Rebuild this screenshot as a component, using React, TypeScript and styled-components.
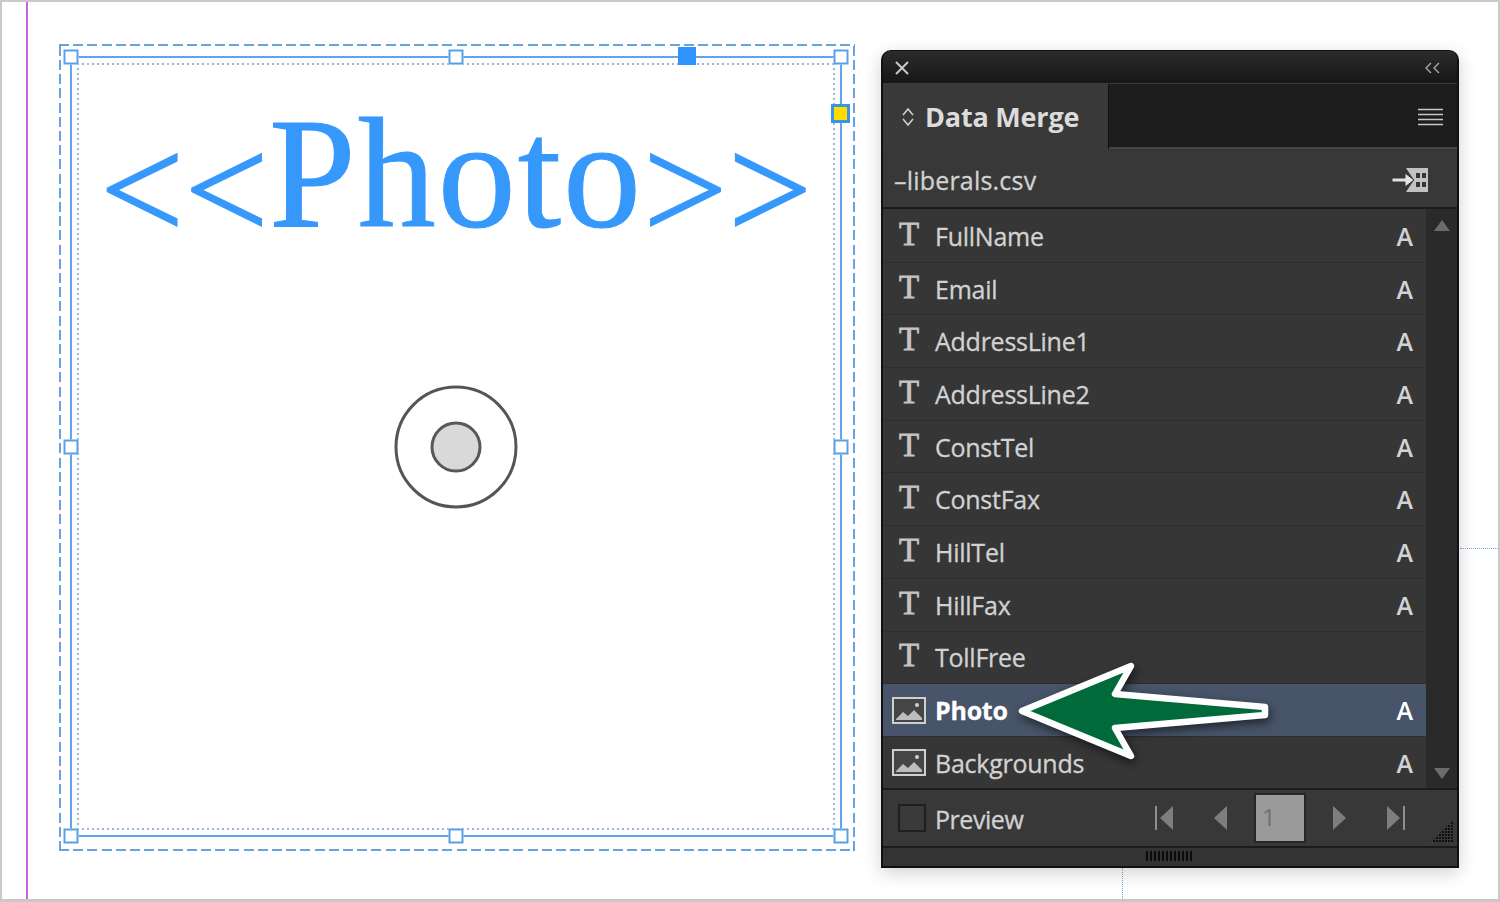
import React from 'react';
import styled, {createGlobalStyle} from 'styled-components';

const fields = [
    {name: 'FullName', kind: 'text', type: 'A'},
    {name: 'Email', kind: 'text', type: 'A'},
    {name: 'AddressLine1', kind: 'text', type: 'A'},
    {name: 'AddressLine2', kind: 'text', type: 'A'},
    {name: 'ConstTel', kind: 'text', type: 'A'},
    {name: 'ConstFax', kind: 'text', type: 'A'},
    {name: 'HillTel', kind: 'text', type: 'A'},
    {name: 'HillFax', kind: 'text', type: 'A'},
    {name: 'TollFree', kind: 'text', type: ''},
    {name: 'Photo', kind: 'image', type: 'A', selected: true},
    {name: 'Backgrounds', kind: 'image', type: 'A'},
];

const handles = [
    [0, 0], [50, 0], [100, 0],
    [0, 50], [100, 50],
    [0, 100], [50, 100], [100, 100],
];

const GlobalStyle = createGlobalStyle`
  html, body {
    margin: 0;
    padding: 0;
    background: #fff;
  }
`

const Page = styled.div`
  position: relative;
  box-sizing: border-box;
  width: 1500px;
  height: 902px;
  display: flex;
  align-items: flex-start;
  padding: 42px 0 0 57px;
  border: 2px solid #c9c9c9;
  border-bottom-width: 3px;
  background: #fff;
  overflow: hidden;
  font-family: "Open Sans", "Liberation Sans", sans-serif;
`

const MarginGuide = styled.div`
  position: absolute;
  left: 24px;
  top: 0;
  bottom: 0;
  width: 2px;
  background: #c565e2;
`

const RulerGuideH = styled.div`
  position: absolute;
  left: 1458px;
  right: 0;
  top: 546px;
  border-top: 1px dotted #6fa5dc;
`

const RulerGuideV = styled.div`
  position: absolute;
  left: 1120px;
  top: 866px;
  bottom: 0;
  border-left: 1px dotted #6fa5dc;
`

const SelectionBounds = styled.div`
  flex: none;
  box-sizing: border-box;
  width: 796px;
  height: 807px;
  display: flex;
  padding: 12px 13px 14px 11px;
  background:
    repeating-linear-gradient(90deg, #6aa3e0 0 10px, transparent 10px 14.2px) top left / 100% 2px no-repeat,
    repeating-linear-gradient(90deg, #6aa3e0 0 10px, transparent 10px 14.2px) bottom left / 100% 2px no-repeat,
    repeating-linear-gradient(0deg, #6aa3e0 0 10px, transparent 10px 14.2px) top left / 2px 100% no-repeat,
    repeating-linear-gradient(0deg, #6aa3e0 0 10px, transparent 10px 14.2px) top right / 2px 100% no-repeat;
`

const ImageFrame = styled.div`
  position: relative;
  flex: 1;
  display: flex;
  padding: 5px;
  border: 2px solid #62a5ea;
`

const TextFrame = styled.div`
  position: relative;
  flex: 1;
  display: flex;
  justify-content: center;
  background:
    repeating-linear-gradient(90deg, #9db6d4 0 2px, transparent 2px 5px) top left / 100% 2px no-repeat,
    repeating-linear-gradient(90deg, #9db6d4 0 2px, transparent 2px 5px) bottom left / 100% 2px no-repeat,
    repeating-linear-gradient(0deg, #9db6d4 0 2px, transparent 2px 5px) top left / 2px 100% no-repeat,
    repeating-linear-gradient(0deg, #9db6d4 0 2px, transparent 2px 5px) top right / 2px 100% no-repeat;
`

const Placeholder = styled.div`
  margin-top: 23px;
  font-family: "Liberation Serif", "Times New Roman", serif;
  font-size: 156px;
  line-height: 176px;
  color: #3798fb;
  -webkit-text-stroke: 1px #3798fb;
  white-space: nowrap;
`

const Bracket = styled.span`
  font-size: 150px;
  line-height: 0;
  vertical-align: -14px;
`

const PlaceholderWord = styled.span`
  letter-spacing: 2px;
`

const Handle = styled.span<{ $x: number, $y: number }>`
  position: absolute;
  left: calc(${({$x}) => $x}% + ${({$x}) => $x / 50 - 1}px);
  top: calc(${({$y}) => $y}% + ${({$y}) => $y / 50 - 1}px);
  box-sizing: border-box;
  width: 15px;
  height: 15px;
  transform: translate(-50%, -50%);
  background: #fff;
  border: 2px solid #5b9fe6;
`

const AnchorHandle = styled.span`
  position: absolute;
  left: 606px;
  top: -11px;
  width: 18px;
  height: 18px;
  background: #2f93fb;
`

const CornerHandle = styled.span`
  position: absolute;
  right: -10px;
  top: 46px;
  box-sizing: border-box;
  width: 19px;
  height: 19px;
  background: #ffdc00;
  border: 3px solid #3b94e6;
`

const TargetOuter = styled.div`
  position: absolute;
  left: 50%;
  top: 50%;
  box-sizing: border-box;
  width: 123px;
  height: 123px;
  display: flex;
  align-items: center;
  justify-content: center;
  transform: translate(-50%, -50%);
  border: 3px solid #555;
  border-radius: 50%;
`

const TargetInner = styled.div`
  box-sizing: border-box;
  width: 51px;
  height: 51px;
  border: 3px solid #585858;
  border-radius: 50%;
  background: #d9d9d9;
`

const Panel = styled.div`
  position: relative;
  flex: none;
  box-sizing: border-box;
  width: 578px;
  height: 818px;
  margin: 6px 0 0 26px;
  display: flex;
  flex-direction: column;
  background: #353535;
  border: 2px solid #111;
  border-top-width: 1px;
  border-radius: 10px 10px 0 0;
  box-shadow: 0 5px 18px rgba(0, 0, 0, .18);
  color: #d2d2d2;
`

const TitleBar = styled.div`
  flex: none;
  box-sizing: border-box;
  height: 33px;
  display: flex;
  align-items: center;
  justify-content: space-between;
  padding: 2px 15px 0 11px;
  background: linear-gradient(#2b2b2b, #161616);
  border-radius: 8px 8px 0 0;
  border-bottom: 1px solid #3a3a3a;
`

const TabRow = styled.div`
  flex: none;
  height: 65px;
  display: flex;
  align-items: stretch;
  justify-content: space-between;
  background: #1d1d1d;
`

const Tab = styled.div`
  width: 226px;
  display: flex;
  align-items: center;
  gap: 10px;
  padding: 0 0 0 18px;
  box-sizing: border-box;
  background: #393939;
  border-right: 1px solid #111;
`

const TabTitle = styled.span`
  font-size: 27px;
  font-weight: 700;
  letter-spacing: -.2px;
  color: #dcdcdc;
`

const MenuButton = styled.div`
  display: flex;
  align-items: center;
  padding: 2px 14px 0 0;
  flex: 1;
  justify-content: flex-end;
  border-bottom: 2px solid #454545;
`

const FileRow = styled.div`
  flex: none;
  height: 60px;
  box-sizing: border-box;
  display: flex;
  align-items: center;
  justify-content: space-between;
  padding: 3px 28px 0 11px;
  font-size: 25px;
  letter-spacing: .2px;
  -webkit-text-stroke: .3px #d2d2d2;
  background: #383838;
  border-bottom: 2px solid #1c1c1c;
`

const ListArea = styled.div`
  flex: none;
  height: 579px;
  display: flex;
`

const List = styled.div`
  flex: 1;
  display: flex;
  flex-direction: column;
  padding-top: 1px;
  overflow: hidden;
`

const Row = styled.div<{ $selected?: boolean }>`
  flex: none;
  height: 52.7px;
  display: flex;
  align-items: center;
  box-sizing: border-box;
  padding-right: 13px;
  font-weight: ${({$selected}) => $selected ? 700 : 400};
  color: ${({$selected}) => $selected ? '#fff' : '#d2d2d2'};
  background: ${({$selected}) => $selected ? '#475469' : '#363636'};
  border-bottom: 1px solid #2e2e2e;
`

const IconSlot = styled.div`
  flex: none;
  width: 52px;
  display: flex;
  justify-content: center;
  box-sizing: border-box;
`

const SerifT = styled.span`
  margin-top: -4px;
  font-family: "Liberation Serif", serif;
  font-size: 33px;
  line-height: 36px;
  color: #c4c4c4;
  -webkit-text-stroke: .8px #c4c4c4;
`

const FieldName = styled.span`
  flex: 1;
  font-size: 25px;
  letter-spacing: -.25px;
  -webkit-text-stroke: .3px currentColor;
`

const FieldType = styled.span`
  font-size: 25px;
  font-weight: 600;
`

const ScrollTrack = styled.div`
  flex: none;
  width: 31px;
  display: flex;
  flex-direction: column;
  align-items: center;
  justify-content: space-between;
  padding: 11px 0 9px;
  box-sizing: border-box;
  background: #2a2a2a;
`

const Footer = styled.div`
  flex: none;
  height: 60px;
  box-sizing: border-box;
  position: relative;
  display: flex;
  align-items: center;
  padding: 0 0 0 15px;
  background: #383838;
  border-top: 2px solid #1b1b1b;
  border-bottom: 2px solid #1b1b1b;
`

const Checkbox = styled.div`
  flex: none;
  box-sizing: border-box;
  width: 28px;
  height: 28px;
  background: #3a3a3a;
  border: 2px solid #1f1f1f;
`

const PreviewLabel = styled.span`
  margin: 2px 0 0 9px;
  font-size: 25px;
  letter-spacing: -.45px;
  -webkit-text-stroke: .3px #d2d2d2;
`

const Pager = styled.div`
  margin-left: auto;
  margin-right: 51px;
  display: flex;
  align-items: center;
  gap: 24px;
`

const PagerGroup = styled.div`
  display: flex;
  align-items: center;
  gap: 36px;
`

const PageField = styled.div`
  box-sizing: border-box;
  width: 52px;
  height: 50px;
  padding: 7px 0 0 6px;
  font-size: 24px;
  line-height: 30px;
  color: #707070;
  background: #9a9a9a;
  border: 2px solid #262626;
`

const ResizeGrip = styled.svg`
  position: absolute;
  right: 3px;
  bottom: 3px;
`

const GripBar = styled.div`
  flex: 1;
  display: flex;
  align-items: center;
  justify-content: center;
  padding: 0 0 2px 0;
  background: #333;
`

const GripMarks = styled.div`
  width: 48px;
  height: 10px;
  background: repeating-linear-gradient(90deg, #0c0c0c 0 2px, transparent 2px 4px);
`

const ArrowOverlay = styled.svg`
  position: absolute;
  left: 120px;
  top: 600px;
  filter: drop-shadow(2px 4px 5px rgba(0, 0, 0, .55));
`

function ImageIcon() {
    return (
        <svg width="34" height="27" viewBox="0 0 34 27">
            <rect x="1" y="1" width="32" height="25" fill="#454545" stroke="#cfcfcf" strokeWidth="2" />
            <path d="M4 22 L11 15 L16 19 L22 13 L30 21 V23 H4 Z" fill="#bdbdbd" />
            <circle cx="25" cy="8" r="2" fill="#d0d0d0" />
        </svg>
    );
}

function PagerTriangle({dir, bar}: { dir: 'left' | 'right', bar?: boolean }) {
    const left = dir === 'left';
    return (
        <svg width="20" height="26" viewBox="0 0 20 26">
            {left
                ? <path d={bar ? 'M19 1 V25 L6 13 Z' : 'M17 1 V25 L4 13 Z'} fill="#7e7e7e" />
                : <path d={bar ? 'M1 1 V25 L14 13 Z' : 'M3 1 V25 L16 13 Z'} fill="#7e7e7e" />}
            {bar && <rect x={left ? 1 : 17} y="1" width="2" height="24" fill="#8e8e8e" />}
        </svg>
    );
}

function App() {
    return (
        <>
            <GlobalStyle />
            <Page>
                <MarginGuide />
                <RulerGuideH />
                <RulerGuideV />
                <SelectionBounds>
                    <ImageFrame>
                        <TextFrame>
                            <Placeholder>
                                <Bracket>&lt;&lt;</Bracket>
                                <PlaceholderWord>Photo</PlaceholderWord>
                                <Bracket>&gt;&gt;</Bracket>
                            </Placeholder>
                        </TextFrame>
                        <TargetOuter><TargetInner /></TargetOuter>
                        {handles.map(([x, y]) => <Handle key={`${x}-${y}`} $x={x} $y={y} />)}
                        <AnchorHandle />
                        <CornerHandle />
                    </ImageFrame>
                </SelectionBounds>
                <Panel>
                    <TitleBar>
                        <svg width="16" height="16" viewBox="0 0 16 16">
                            <path d="M2 2 L14 14 M14 2 L2 14" stroke="#c8c8c8" strokeWidth="2" />
                        </svg>
                        <svg width="18" height="12" viewBox="0 0 18 12">
                            <path d="M7 1 L2 6 L7 11 M15 1 L10 6 L15 11" stroke="#a8a8a8" strokeWidth="1.4" fill="none" />
                        </svg>
                    </TitleBar>
                    <TabRow>
                        <Tab>
                            <svg width="14" height="20" viewBox="0 0 14 20">
                                <path d="M2 8 L7 2 L12 8 M2 12 L7 18 L12 12" stroke="#cfcfcf" strokeWidth="1.6" fill="none" />
                            </svg>
                            <TabTitle>Data Merge</TabTitle>
                        </Tab>
                        <MenuButton>
                            <svg width="25" height="18" viewBox="0 0 25 18">
                                <path d="M0 1.5 H25 M0 6.5 H25 M0 11.5 H25 M0 16.5 H25" stroke="#c8c8c8" strokeWidth="1.6" />
                            </svg>
                        </MenuButton>
                    </TabRow>
                    <FileRow>
                        <span>–liberals.csv</span>
                        <svg width="37" height="26" viewBox="0 0 37 26">
                            <path d="M14 1 H36 V25 H14 L22 13 Z" fill="#c2c2c2" />
                            <path d="M0 11 H13 V6 L22 13 L13 20 V15 H0 Z" fill="#e2e2e2" stroke="#353535" strokeWidth="1" />
                            <rect x="24" y="6" width="4" height="5" fill="#353535" />
                            <rect x="30" y="6" width="4" height="5" fill="#353535" />
                            <rect x="24" y="15" width="4" height="5" fill="#353535" />
                            <rect x="30" y="15" width="4" height="5" fill="#353535" />
                        </svg>
                    </FileRow>
                    <ListArea>
                        <List>
                            {fields.map(field => (
                                <Row key={field.name} $selected={field.selected}>
                                    <IconSlot>
                                        {field.kind === 'text' ? <SerifT>T</SerifT> : <ImageIcon />}
                                    </IconSlot>
                                    <FieldName>{field.name}</FieldName>
                                    <FieldType>{field.type}</FieldType>
                                </Row>
                            ))}
                        </List>
                        <ScrollTrack>
                            <svg width="16" height="11" viewBox="0 0 16 11"><path d="M8 0 L16 11 H0 Z" fill="#6c6c6c" /></svg>
                            <svg width="16" height="11" viewBox="0 0 16 11"><path d="M0 0 H16 L8 11 Z" fill="#6c6c6c" /></svg>
                        </ScrollTrack>
                    </ListArea>
                    <Footer>
                        <Checkbox />
                        <PreviewLabel>Preview</PreviewLabel>
                        <Pager>
                            <PagerGroup>
                                <PagerTriangle dir="left" bar />
                                <PagerTriangle dir="left" />
                            </PagerGroup>
                            <PageField>1</PageField>
                            <PagerGroup>
                                <PagerTriangle dir="right" />
                                <PagerTriangle dir="right" bar />
                            </PagerGroup>
                        </Pager>
                        <ResizeGrip width="24" height="24" viewBox="0 0 24 24">
                            <defs>
                                <pattern id="gripDots" width="3" height="3" patternUnits="userSpaceOnUse">
                                    <rect width="2" height="2" fill="#0f0f0f" />
                                </pattern>
                            </defs>
                            <path d="M24 0 V24 H0 Z" fill="url(#gripDots)" />
                        </ResizeGrip>
                    </Footer>
                    <GripBar><GripMarks /></GripBar>
                    <ArrowOverlay width="270" height="120" viewBox="0 0 270 120">
                        <path
                            d="M19 60 L128 15 L112 43 L262 56 V64 L112 77 L128 105 Z"
                            fill="#006a3a"
                            stroke="#fff"
                            strokeWidth="6.5"
                            strokeLinejoin="round"
                        />
                    </ArrowOverlay>
                </Panel>
            </Page>
        </>
    );
}

export default App;
